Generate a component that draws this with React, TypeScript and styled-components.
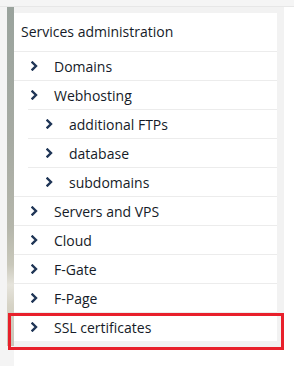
import React from "react"
import styled, { createGlobalStyle } from "styled-components"

const GlobalStyle = createGlobalStyle`
  html, body {
    margin: 0;
    padding: 0;
    background: #ffffff;
  }
  body {
    font-family: "Open Sans", "Noto Sans", sans-serif;
  }
`

type Item = { label: string; children?: string[] }

const items: Item[] = [
  { label: "Domains" },
  { label: "Webhosting", children: ["additional FTPs", "database", "subdomains"] },
  { label: "Servers and VPS" },
  { label: "Cloud" },
  { label: "F-Gate" },
  { label: "F-Page" },
  { label: "SSL certificates" },
]

function Chevron() {
  return (
    <svg width="7" height="10" viewBox="0 0 7 10" aria-hidden="true">
      <polyline
        points="1.5,1.5 5,5 1.5,8.5"
        fill="none"
        stroke="#1f3556"
        strokeWidth="2.4"
        strokeLinecap="square"
        strokeLinejoin="miter"
      />
    </svg>
  )
}

export default function App() {
  return (
    <>
      <GlobalStyle />
      <Screen>
        <TopBand />
        <Body>
          <LeftEdge>
            <PhotoStrip />
          </LeftEdge>
          <Frame>
            <Panel>
              <Heading>Services administration</Heading>
              <Menu>
                {items.map(item => (
                  <MenuItem key={item.label}>
                    <Row $level={0}>
                      <Chevron />
                      <span>{item.label}</span>
                    </Row>
                    {item.children && (
                      <SubMenu>
                        {item.children.map(child => (
                          <SubItem key={child}>
                            <Row $level={1}>
                              <Chevron />
                              <span>{child}</span>
                            </Row>
                          </SubItem>
                        ))}
                      </SubMenu>
                    )}
                  </MenuItem>
                ))}
              </Menu>
            </Panel>
          </Frame>
          <RightGap />
          <Highlight />
        </Body>
      </Screen>
    </>
  )
}

const Screen = styled.div`
  width: 294px;
  height: 366px;
  overflow: hidden;
  display: flex;
  flex-direction: column;
`

const TopBand = styled.div`
  height: 6px;
  flex: none;
  background: #f5f5f5;
  border-bottom: 1px solid #e7e7e7;
`

const Body = styled.div`
  position: relative;
  flex: 1;
  display: flex;
  align-items: flex-start;
`

const LeftEdge = styled.div`
  width: 7px;
  flex: none;
  align-self: stretch;
  background: #f4f4f4;
  padding-left: 7px;
  display: flex;
`

const PhotoStrip = styled.div`
  width: 7px;
  height: 339px;
  background: linear-gradient(
    180deg,
    #9aa39d 0%,
    #a7aba3 40%,
    #b5b6ab 65%,
    #c9c8bb 76%,
    #e6e4dc 82%,
    #d6d3c6 88%,
    #c8c5b8 100%
  );
`

const Frame = styled.div`
  flex: 1;
  background: #f2f2f2;
  padding: 6px 7px 6px 0;
`

const Panel = styled.div`
  background: #ffffff;
  color: #151b28;
  font-size: 14px;
`

const Heading = styled.div`
  height: 38px;
  line-height: 38px;
  padding-left: 7px;
  border-bottom: 1px solid #ececec;
`

const Menu = styled.ul`
  list-style: none;
  margin: 0;
  padding: 0;
`

const MenuItem = styled.li`
  border-bottom: 1px solid #ececec;

  &:last-child {
    border-bottom: none;
  }
`

const SubMenu = styled.ul`
  list-style: none;
  margin: 0 0 0 14px;
  padding: 0;
`

const SubItem = styled.li`
  border-top: 1px solid #ececec;
`

const Row = styled.div<{ $level: number }>`
  height: 28px;
  display: flex;
  align-items: center;
  padding-left: ${p => (p.$level ? 18 : 17)}px;
  gap: 16px;

  svg {
    flex: none;
    margin-top: -1px;
  }
`

const RightGap = styled.div`
  width: 10px;
  flex: none;
`

const Highlight = styled.div`
  position: absolute;
  left: 8px;
  top: 306px;
  width: 270px;
  height: 31px;
  border: 3px solid #e8202b;
  pointer-events: none;
`
